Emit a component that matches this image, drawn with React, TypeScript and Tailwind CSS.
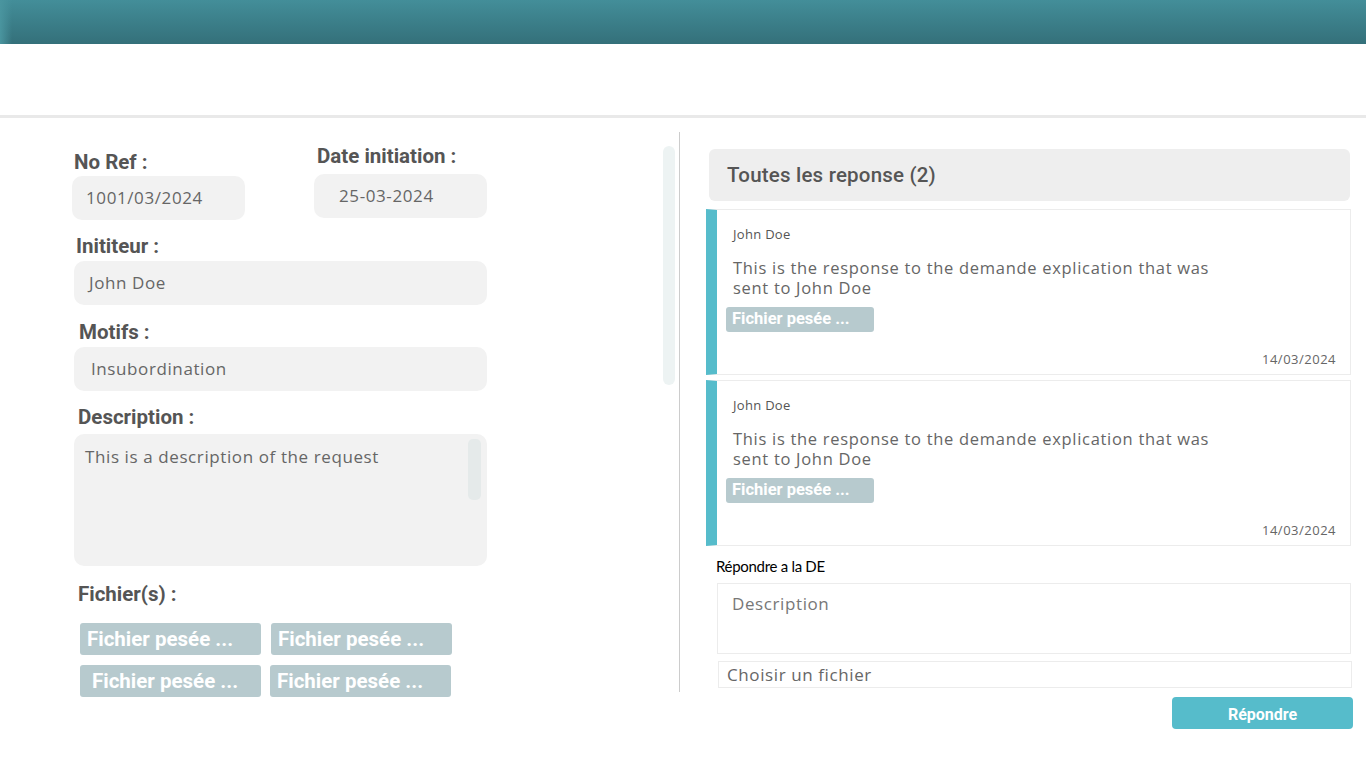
import React from "react";

const val = { fontFamily: '"Open Sans", "DejaVu Sans", sans-serif' };
const rob = { fontFamily: 'Roboto, "Liberation Sans", sans-serif' };

function Chip({ w, big, className = "" }: { w: string; big?: boolean; className?: string }) {
  return (
    <div
      className={`${w} ${big ? "h-[32px] text-[20.5px]" : "h-[25px] text-[16.5px]"} ${className} flex shrink-0 items-center rounded-[3px] bg-[#b7cace] font-bold text-white`}
      style={rob}
    >
      Fichier pesée ...
    </div>
  );
}

function Card() {
  return (
    <div className="flex h-[166px] w-[645px] flex-col border border-l-[11px] border-[#ececec] border-l-[#56bccb] bg-white">
      <div className="pl-[16px] pt-[16px] text-[13px] leading-[16px] tracking-[0.3px] text-[#555]" style={val}>
        John Doe
      </div>
      <div className="mt-[16px] max-w-[505px] pl-[16px] text-[16.5px] leading-[20px] tracking-[0.7px] text-[#666]" style={val}>
        This is the response to the demande explication that was sent to John Doe
      </div>
      <Chip w="w-[148px]" className="ml-[9px] mt-[9px] pl-[6px]" />
      <div className="mt-auto pb-[7px] pr-[14px] text-right text-[13px] leading-[16px] tracking-[0.5px] text-[#666]" style={val}>
        14/03/2024
      </div>
    </div>
  );
}

export default function App() {
  return (
    <div className="min-h-[768px] w-[1366px] overflow-hidden bg-white">
      <div className="relative h-[44px] bg-gradient-to-b from-[#438e99] to-[#34707a]">
        <div className="absolute inset-y-0 left-0 w-[12px] bg-gradient-to-r from-[#4a959f] to-transparent" />
      </div>
      <div className="h-[71px]" />
      <div className="h-[3px] bg-[#e9e9e9]" />
      <div className="flex">
        {/* left panel */}
        <div className="mt-[14px] flex h-[560px] w-[680px] shrink-0 border-r border-[#cccccc]">
          <div className="ml-[72px] flex w-[415px] flex-col [&>*]:shrink-0">
            <div className="flex">
              <div className="flex flex-col">
                <div className="mt-[18px] pl-[2px] text-[20.5px] font-bold leading-[24px] text-[#555]" style={rob}>
                  No Ref :
                </div>
                <div className="mt-[2px] flex h-[44px] w-[173px] items-center rounded-[10px] bg-[#f2f2f2] pl-[14px] text-[17px] tracking-[0.6px] text-[#666]" style={val}>
                  1001/03/2024
                </div>
              </div>
              <div className="ml-[69px] flex flex-col">
                <div className="mt-[12px] pl-[3px] text-[20.5px] font-bold leading-[24px] text-[#555]" style={rob}>
                  Date initiation :
                </div>
                <div className="mt-[6px] flex h-[44px] w-[173px] items-center rounded-[10px] bg-[#f2f2f2] pl-[25px] text-[17px] tracking-[0.6px] text-[#666]" style={val}>
                  25-03-2024
                </div>
              </div>
            </div>
            <div className="mt-[14px] pl-[4px] text-[20.5px] font-bold leading-[24px] text-[#555]" style={rob}>
              Inititeur :
            </div>
            <div className="ml-[2px] mt-[3px] flex h-[44px] w-[413px] items-center rounded-[10px] bg-[#f2f2f2] pl-[15px] text-[17px] tracking-[0.6px] text-[#666]" style={val}>
              John Doe
            </div>
            <div className="mt-[15px] pl-[7px] text-[20.5px] font-bold leading-[24px] text-[#555]" style={rob}>
              Motifs :
            </div>
            <div className="ml-[2px] mt-[3px] flex h-[44px] w-[413px] items-center rounded-[10px] bg-[#f2f2f2] pl-[17px] text-[17px] tracking-[0.6px] text-[#666]" style={val}>
              Insubordination
            </div>
            <div className="mt-[14px] pl-[6px] text-[20.5px] font-bold leading-[24px] text-[#555]" style={rob}>
              Description :
            </div>
            <div className="ml-[2px] mt-[5px] flex h-[132px] w-[413px] rounded-[10px] bg-[#f2f2f2]">
              <div className="flex-1 pl-[11px] pt-[11px] text-[17px] leading-[24px] tracking-[0.6px] text-[#666]" style={val}>
                This is a description of the request
              </div>
              <div className="mr-[6px] mt-[5px] h-[61px] w-[13px] rounded-[5px] bg-[#e5eaea]" />
            </div>
            <div className="mt-[16px] pl-[6px] text-[20.5px] font-bold leading-[24px] text-[#555]" style={rob}>
              Fichier(s) :
            </div>
            <div className="ml-[8px] mt-[17px] flex gap-[10px]">
              <Chip w="w-[181px]" big className="pl-[7px]" />
              <Chip w="w-[181px]" big className="pl-[7px]" />
            </div>
            <div className="ml-[8px] mt-[10px] flex gap-[9px]">
              <Chip w="w-[181px]" big className="pl-[12px]" />
              <Chip w="w-[181px]" big className="pl-[7px]" />
            </div>
          </div>
          <div className="ml-auto mr-[4px] mt-[14px] h-[239px] w-[12px] rounded-[6px] bg-[#edf3f3]" />
        </div>
        {/* right panel */}
        <div className="ml-[26px] flex w-[645px] flex-col [&>*]:shrink-0">
          <div className="ml-[3px] mt-[31px] flex h-[52px] w-[641px] items-center rounded-[6px] bg-[#eeeeee] pl-[18px] text-[20.5px] font-medium tracking-[0.2px] text-[#555]" style={rob}>
            Toutes les reponse (2)
          </div>
          <div className="mt-[8px]">
            <Card />
          </div>
          <div className="mt-[5px]">
            <Card />
          </div>
          <div className="ml-[10px] mt-[11px] text-[15px] leading-[18px] tracking-[-0.3px] text-black" style={{ fontFamily: 'Lato, "Liberation Sans", sans-serif' }}>
            Répondre a la DE
          </div>
          <div className="ml-[11px] mt-[8px] h-[71px] w-[634px] border border-[#ececec] pl-[14px] pt-[8px] text-[17px] leading-[24px] tracking-[0.6px] text-[#777]" style={val}>
            Description
          </div>
          <div className="ml-[12px] mt-[7px] flex h-[27px] w-[634px] items-center border border-[#ececec] pl-[8px] text-[17px] tracking-[0.6px] text-[#666]" style={val}>
            Choisir un fichier
          </div>
          <div className="ml-[466px] mt-[9px] flex h-[32px] w-[181px] items-center justify-center rounded-[4px] bg-[#56bccb] pt-[3px] text-[16px] font-bold text-white" style={rob}>
            Répondre
          </div>
        </div>
      </div>
    </div>
  );
}
